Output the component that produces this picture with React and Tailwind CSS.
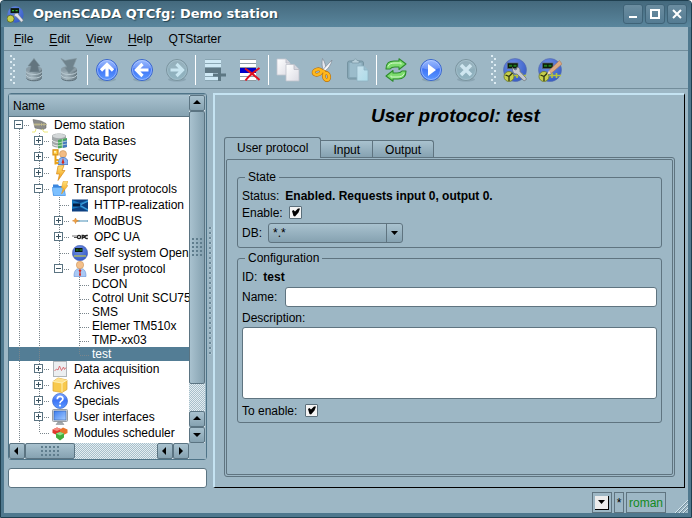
import React from "react";

const FACE = "bg-linear-to-b from-[#a9c2cf] to-[#86a2b1]";

/* ---------- toolbar icons ---------- */

function Defs() {
  return (
    <svg width="0" height="0" className="absolute" aria-hidden="true">
      <defs>
        <linearGradient id="blue" x1="0" y1="0" x2="0" y2="1">
          <stop offset="0" stopColor="#7fa8ff" />
          <stop offset="0.45" stopColor="#3f74f6" />
          <stop offset="1" stopColor="#5c9aff" />
        </linearGradient>
        <linearGradient id="pale" x1="0" y1="0" x2="0" y2="1">
          <stop offset="0" stopColor="#8ba8b5" />
          <stop offset="1" stopColor="#92b5c2" />
        </linearGradient>
        <linearGradient id="steel" x1="0" y1="0" x2="1" y2="0">
          <stop offset="0" stopColor="#8d9fa9" />
          <stop offset="0.35" stopColor="#a0b1ba" />
          <stop offset="1" stopColor="#64767f" />
        </linearGradient>
        <linearGradient id="paper" x1="0" y1="0" x2="1" y2="1">
          <stop offset="0" stopColor="#ffffff" />
          <stop offset="1" stopColor="#dcdce4" />
        </linearGradient>
        <linearGradient id="ice" x1="0" y1="0" x2="1" y2="1">
          <stop offset="0" stopColor="#c8e2ed" />
          <stop offset="1" stopColor="#addbe9" />
        </linearGradient>
        <radialGradient id="globe" cx="0.4" cy="0.3" r="0.8">
          <stop offset="0" stopColor="#6f8fe4" />
          <stop offset="1" stopColor="#2f56c4" />
        </radialGradient>
        <linearGradient id="gold" x1="0" y1="0" x2="0" y2="1">
          <stop offset="0" stopColor="#ffe27a" />
          <stop offset="1" stopColor="#f0980c" />
        </linearGradient>
        <linearGradient id="screen" x1="0" y1="0" x2="1" y2="1">
          <stop offset="0" stopColor="#3c7df0" />
          <stop offset="1" stopColor="#a5ccff" />
        </linearGradient>
      </defs>
    </svg>
  );
}

function Svg({ children, size = 24, box = 24 }) {
  return (
    <svg width={size} height={size} viewBox={`0 0 ${box} ${box}`} className="shrink-0" aria-hidden="true">
      {children}
    </svg>
  );
}

function DbIcon({ down }) {
  return (
    <Svg>
      <path d="M4 11v8c0 2 3.500 3.500 8 3.500s8-1.500 8-3.500v-8z" fill="url(#steel)" />
      <ellipse cx="12" cy="11" rx="8" ry="3" fill="#8a9ca6" />
      <path d="M4 13.500c1 4 15 4 16 0M4 17c1 4 15 4 16 0" fill="none" stroke="#b9cad2" strokeWidth="1" />
      <path d="M4.500 20.500c2 3 13 3 15 0" fill="none" stroke="#5b6c76" />
      {down ? (
        <path d="M4 .5l4 2 5-1 6.500-1-3.500 8.500 2 .5-6 6-4.500-6 2.500-.5z" fill="#6f838d" stroke="#84979f" strokeWidth=".6" />
      ) : (
        <path d="M12 .5l6 7.500h-2l1.500 6h-10L9 8H6z" fill="#63757f" stroke="#7e929c" strokeWidth=".6" />
      )}
    </Svg>
  );
}

function Round({ pale, children }) {
  return (
    <Svg>
      <ellipse cx="12" cy="21.500" rx="9" ry="2" fill="#7d98a5" opacity=".6" />
      <circle cx="12" cy="12" r="10.500" fill={pale ? "url(#pale)" : "url(#blue)"} stroke={pale ? "#7b949f" : "#3a66cc"} />
      <circle cx="12" cy="12" r="9.500" fill="none" stroke={pale ? "#a3bfcb" : "#9fbcff"} strokeWidth=".8" />
      <path d="M3.500 10a8.500 8 0 0 1 17 0c-5 2-12 2-17 0z" fill="#fff" opacity={pale ? ".08" : ".22"} />
      {children}
    </Svg>
  );
}

function Arrow({ pale, turn }) {
  return (
    <Round pale={pale}>
      <path
        d="M12 18.500V7M6 12.500L12 6.500l6 6"
        transform={`rotate(${turn} 12 12)`}
        fill="none"
        stroke={pale ? "#c9e6f1" : "#fff"}
        strokeWidth="3.200"
      />
    </Round>
  );
}

function ItemAdd() {
  return (
    <Svg>
      <rect x="2" y="1" width="16" height="22" fill="#cfe9f5" />
      <path d="M2 1.500h16M2 5.500h16M2 9.500h16M2 18.500h16M2 22.500h16" stroke="#8aa6b3" />
      <rect x="2" y="10" width="16" height="5" fill="#5f7884" />
      <path d="M16.500 10v13M10 17h13" stroke="#5d7783" strokeWidth="3" />
    </Svg>
  );
}

function ItemDelete() {
  return (
    <Svg>
      <rect x="2" y="1" width="16" height="22" fill="#fff" />
      <path d="M2 1.500h16M2 5.500h16M2 9.500h16M2 18.500h16M2 22.500h16" stroke="#8f9ca3" />
      <rect x="2" y="10" width="16" height="5" fill="#0000c8" />
      <path d="M7 10.500c4 3 10 7 14.500 11.500M21.500 10c-4 3-10 7-14 12.500" fill="none" stroke="#e01020" strokeWidth="2" />
    </Svg>
  );
}

function Copy() {
  return (
    <Svg>
      <path d="M1 1h9l4 4v12H1z" fill="url(#paper)" stroke="#c3c7cf" strokeWidth=".8" />
      <path d="M10 1v4h4" fill="#d5d6de" stroke="#b5b8c2" strokeWidth=".8" />
      <path d="M10 6.500h8l5 5V23H10z" fill="url(#paper)" stroke="#bfc3cc" strokeWidth=".8" />
      <path d="M18 6.500v5h5" fill="#d5d6de" stroke="#b5b8c2" strokeWidth=".8" />
    </Svg>
  );
}

function Cut() {
  return (
    <Svg>
      <path d="M11.500.5c2.500 3 3.500 8 3.500 12l-2.500.5c-1.500-4-2-8-1-12.500z" fill="#e6e8ee" stroke="#7f8996" strokeWidth=".7" />
      <path d="M21 2c-1 5-4 9-7.500 11.500L11.500 12z" fill="#f6f7fa" stroke="#7f8996" strokeWidth=".7" />
      <g fill="none" stroke="#b9700a" strokeWidth="3.800">
        <ellipse cx="6.500" cy="14" rx="4" ry="2.600" transform="rotate(-15 6.500 14)" />
        <ellipse cx="15.500" cy="18.500" rx="2.600" ry="3.600" transform="rotate(-12 15.500 18.500)" />
        <path d="M10 12.500l4 1.500" />
      </g>
      <g fill="none" stroke="#ffb81c" strokeWidth="2.600">
        <ellipse cx="6.500" cy="14" rx="4" ry="2.600" transform="rotate(-15 6.500 14)" />
        <ellipse cx="15.500" cy="18.500" rx="2.600" ry="3.600" transform="rotate(-12 15.500 18.500)" />
        <path d="M10 12.500l4 1.500" />
      </g>
    </Svg>
  );
}

function Paste() {
  return (
    <Svg>
      <rect x="1.500" y="3" width="16" height="18" rx="2" fill="#86a7b6" stroke="#7593a1" />
      <rect x="3.500" y="5" width="12" height="14" fill="#9bbccb" />
      <path d="M6 5V2.500h2C8 .5 11 .5 11 2.500h2V5z" fill="#b6ced9" stroke="#7a97a4" strokeWidth=".7" />
      <path d="M11 8h7l4 4v11H11z" fill="url(#ice)" stroke="#8fb3c3" strokeWidth=".8" />
      <path d="M18 8v4h4" fill="#9ac0d0" stroke="#8fb3c3" strokeWidth=".8" />
    </Svg>
  );
}

function Refresh() {
  return (
    <Svg>
      <g fill="#7ddc6e" stroke="#2d8c2c" strokeWidth="1.100" strokeLinejoin="round">
        <path d="M2 11c0-6 3.500-8 8-8h5V.8l7 5.200-7 5.500V9h-4c-2.500 0-4 .5-5 2z" />
        <path d="M22 13c0 6-3.500 8-8 8H9v2.200L2 18l7-5.500V15h4c2.500 0 4-.5 5-2z" />
      </g>
      <path d="M4 8.500C5 5.500 8 5 11 5h6v1.500M20 15.500c-1 3-4 3.500-7 3.500H7v-1.500" fill="none" stroke="#d2f9ca" />
    </Svg>
  );
}

function Station({ tool }) {
  return (
    <Svg>
      <circle cx="12" cy="12" r="11.500" fill="url(#globe)" stroke="#5a6da8" strokeWidth=".6" />
      <rect x="4.500" y="5" width="10.500" height="5.500" fill="#0b1a0b" stroke="#5b6470" strokeWidth=".7" />
      <path d="M6 7.700h3.200M10.500 7.700h3" stroke="#1f7a1f" strokeWidth="2" />
      <path d="M11 17.500h12M14 15v5M18.500 15v5" stroke="#b8c53c" strokeWidth="1.600" />
      <circle cx="6" cy="18.500" r="5" fill="#c6d04c" stroke="#6b7626" strokeWidth=".8" />
      <path d="M2.500 17l3.500 1.500V23M6 18.500L9.500 15" stroke="#2e3510" strokeWidth="1.300" fill="none" />
      {tool === "wrench" && (
        <path
          d="M9.500 9.500l2.500 2.500 1.500-.5.500-2.500c2.500.5 3.500 2.500 3 4.500l6 6.500c1 1.500-1.200 3.500-2.700 2.200L14 16c-3 .5-5-2.500-4.500-6.500z"
          fill="#c5c8cd"
          stroke="#6d7279"
          strokeWidth=".8"
        />
      )}
      {tool === "pencil" && (
        <>
          <path d="M11 12.500L21.500 2.500 24 6 13 15.500z" fill="#dca882" stroke="#a9795a" strokeWidth=".6" />
          <path d="M9 16.500l2-4 2 3z" fill="#f1d8b8" />
        </>
      )}
    </Svg>
  );
}

/* ---------- tree icons, drawn on a 16px grid ---------- */

const treeIcons = {
  station: (
    <Svg size={16} box={16}>
      <path d="M1 2.500l8 1.500 5 2.500v4.500l-3 1.500L3 11z" fill="#8b8b88" stroke="#6b6b69" strokeWidth=".6" />
      <path d="M3 9V6M5 9V6M7 9V6M9.500 9V6M12 9V6M2 7.500h13" stroke="#c4bc8c" strokeWidth=".8" />
      <path d="M0 15h3l1-3M10 12l2 3h4" stroke="#ece87a" fill="none" strokeWidth="1" />
    </Svg>
  ),
  db: (
    <Svg size={16} box={16}>
      <path d="M0 3c0-3.500 14-3.500 14 0v9c0 3.500-14 3.500-14 0z" fill="#a3a8aa" />
      <ellipse cx="7" cy="3" rx="6.500" ry="2.200" fill="#d3d7d8" />
      <path d="M0 7c1 2 5 2.500 7 2.500M0 10.500c1 2 5 2.500 7 2.500" stroke="#ebefef" fill="none" />
      <path d="M6 7l9-2v9l-9 1.500z" fill="#4aa95c" />
      <path d="M10.500 8l4.500-1v7l-4.500 1z" fill="#4378c0" />
      <path d="M6 10l9-2M6 12.700l9-1.700M10.300 6v9" stroke="#d5ecd9" strokeWidth=".7" />
    </Svg>
  ),
  security: (
    <Svg size={16} box={16}>
      <circle cx="11" cy="5" r="3.500" fill="#f2bc84" stroke="#c0843f" strokeWidth=".5" />
      <path d="M6 15.500c0-5 1.500-7 5-7s5 2 5 7z" fill="#8cb6f2" stroke="#3f6fc0" strokeWidth=".8" />
      <path d="M11 9l-1.300 4.500L11 15.500l1.300-2z" fill="#cf2b22" />
      <path d="M1 .8h5v5H1z" fill="#ffd24a" stroke="#d98e14" strokeWidth="1.200" />
      <path d="M3.500 6v9.500M4 11h2.500M4 14h2.500" stroke="#e9a31a" strokeWidth="2" />
      <circle cx="3" cy="2.800" r=".9" fill="#fff" />
    </Svg>
  ),
  bolt: (
    <Svg size={16} box={16}>
      <path d="M6 1l6-.5-2 5h3L6 15.500 7.500 9H4.500z" fill="url(#gold)" stroke="#d88a18" strokeWidth=".7" />
    </Svg>
  ),
  folder: (
    <Svg size={16} box={16}>
      <path d="M1 3.500h5L7 5h6v9.500H1z" fill="#3a86de" />
      <path d="M0 6.500h12l1.500 8h-12z" fill="#7cc0ff" stroke="#4a94e4" strokeWidth=".6" />
      <path d="M11 .5L16 0l-1.500 4.500H16L9.500 13l1.700-6H9.500z" fill="url(#gold)" stroke="#e09a28" strokeWidth=".5" />
    </Svg>
  ),
  http: (
    <Svg size={16} box={16}>
      <rect x="0" y="2.500" width="16" height="12" fill="#0c3f80" />
      <path d="M0 3l8 3 8-3v2l-7 3 7 4v2l-8-4-8 2z" fill="#1a77bd" />
      <path d="M1 8h7" stroke="#041c42" strokeWidth="3" />
      <path d="M9 7.500L16 4M9 9l7 4" fill="none" stroke="#58b6e8" strokeWidth=".7" />
    </Svg>
  ),
  modbus: (
    <Svg size={16} box={16}>
      <path d="M3 8h13" stroke="#8ab6cf" strokeWidth="2" />
      <path d="M3.500 5l.8 2 2.200.8-2.200.8-.8 2-.8-2L.5 7.800 2.700 7z" fill="#f0a040" stroke="#d8842a" strokeWidth=".6" />
      <path d="M8 8h7" stroke="#d7e9f1" strokeWidth=".7" />
    </Svg>
  ),
  opc: (
    <Svg size={16} box={16}>
      <path d="M0 7h5" stroke="#8a8a8a" strokeWidth="1.200" />
      <path d="M2 8.500h3" stroke="#555" strokeWidth="1" />
      <circle cx="7" cy="8" r="1.600" fill="none" stroke="#222" strokeWidth="1.300" />
      <path d="M10.200 10.300V6.500h1.200a1 1 0 0 1 0 2h-1M15.800 6.500h-1.300a1.500 1.500 0 0 0 0 3h1.300" fill="none" stroke="#222" strokeWidth="1.300" />
    </Svg>
  ),
  self: (
    <Svg size={16} box={16}>
      <circle cx="8" cy="8" r="7.700" fill="url(#globe)" stroke="#4a5fae" strokeWidth=".5" />
      <rect x="3" y="3" width="7.500" height="4" fill="#0b1a0b" />
      <path d="M4 5h2.500M7.500 5H10" stroke="#2fa32f" strokeWidth="1.200" />
      <path d="M2 11h12" stroke="#c3c94e" strokeWidth="1.200" />
    </Svg>
  ),
  user: (
    <Svg size={16} box={16}>
      <path d="M2 15.500c0-6 2-8 6-8s6 2 6 8z" fill="#a9c9f5" stroke="#5f8fd6" strokeWidth=".6" />
      <circle cx="8" cy="4" r="3.700" fill="#f4c08a" stroke="#c48a4e" strokeWidth=".5" />
      <path d="M8 8l-1.500 1.500L7.500 11 7 14l1 1.500L9 14l-.5-3 1-1.500z" fill="#d42a20" />
    </Svg>
  ),
  chart: (
    <Svg size={16} box={16}>
      <rect x="1.500" y=".5" width="13" height="15" fill="#eceff1" stroke="#b0b6ba" />
      <path d="M2.500 10l2-2 1.500 1 1.500-4 2 4.500L11.500 6l1 2.500 1.500-2" fill="none" stroke="#d9646c" strokeWidth=".9" />
    </Svg>
  ),
  archive: (
    <Svg size={16} box={16}>
      <path d="M1 4.500L6 1l9 2v9.500l-5 3-9-1.500z" fill="#f8c94c" stroke="#d9a030" strokeWidth=".7" />
      <path d="M1 4.500L6 1l9 2-5 3z" fill="#fde08a" />
      <path d="M1 4.500L10 6l5-3M10 6v9" stroke="#fff0b4" fill="none" />
    </Svg>
  ),
  help: (
    <Svg size={16} box={16}>
      <circle cx="8" cy="8" r="7.500" fill="url(#blue)" stroke="#3c68cc" strokeWidth=".7" />
      <path d="M5.300 6.300c0-3.800 5.600-3.600 5.600-.5C10.900 8 8 7.800 8 10.300" fill="none" stroke="#fff" strokeWidth="1.700" />
      <circle cx="8" cy="12.600" r="1.100" fill="#fff" />
    </Svg>
  ),
  monitor: (
    <Svg size={16} box={16}>
      <rect x=".5" y=".5" width="15" height="12" rx="1" fill="#d6d8da" stroke="#999ea2" />
      <rect x="2" y="2" width="12" height="9" fill="url(#screen)" stroke="#24509a" strokeWidth=".5" />
      <path d="M6 13h4l2 2.500H4z" fill="#a5aaae" stroke="#80858a" strokeWidth=".5" />
    </Svg>
  ),
  modules: (
    <Svg size={16} box={16}>
      <path d="M5 2.500l4 1.500v4.500L5 10 .5 8V4.500z" fill="#e0382c" />
      <path d="M11 2.500l4.500 2V8L11.500 10 8 8V4.500z" fill="#e8742c" />
      <path d="M8 7l4 1.500v4L8 15.500l-4-3v-4z" fill="#3fae3c" />
      <path d="M8 7l4 1.500-4 2-4-2z" fill="#92e08a" />
      <path d="M5 2.500L9 4 5 6 .5 4.500z" fill="#f58a7e" />
    </Svg>
  ),
};

/* ---------- tree ---------- */

// Branch codes: "|" line, "T" tee, "L" last child, " " blank; with a box: "+" / "-" (tee), "=" (last child, open), "R" (root)
const rows = [
  ["R", "station", "Demo station"],
  ["|+", "db", "Data Bases"],
  ["|+", "security", "Security"],
  ["|+", "bolt", "Transports"],
  ["|-", "folder", "Transport protocols"],
  ["||T", "http", "HTTP-realization"],
  ["||+", "modbus", "ModBUS"],
  ["||+", "opc", "OPC UA"],
  ["||T", "self", "Self system Open"],
  ["||=", "user", "User protocol"],
  ["|| T", null, "DCON"],
  ["|| T", null, "Cotrol Unit SCU75"],
  ["|| T", null, "SMS"],
  ["|| T", null, "Elemer TM510x"],
  ["|| T", null, "TMP-xx03"],
  ["|| L", null, "test", true],
  ["|+", "chart", "Data acquisition"],
  ["|+", "archive", "Archives"],
  ["|+", "help", "Specials"],
  ["|+", "monitor", "User interfaces"],
  ["|L", "modules", "Modules scheduler"],
];

function Branch({ kind, height }) {
  const boxed = "+-=R".includes(kind);
  const above = kind !== " " && kind !== "R";
  const below = "|T+-R".includes(kind);
  return (
    <svg width="20" height={height} className="shrink-0" shapeRendering="crispEdges" aria-hidden="true">
      <g stroke="#7a858c" strokeDasharray="1 1" fill="none">
        {above && <path d="M10.500 0v8" />}
        {below && <path d={`M10.500 8V${height}`} />}
        {kind !== "|" && kind !== " " && <path d="M11 8.500h9" />}
      </g>
      {boxed && (
        <g>
          <rect x="5" y="3" width="9" height="9" fill="#5b7482" />
          <rect x="6" y="4" width="7" height="7" fill="#fff" />
          <rect x="7" y="7" width="5" height="1" fill="#3a5360" />
          {kind === "+" && <rect x="9" y="5" width="1" height="5" fill="#3a5360" />}
        </g>
      )}
    </svg>
  );
}

function TreeRow({ row }) {
  const [code, icon, label, selected] = row;
  return (
    <li
      className={`flex items-center whitespace-nowrap ${icon ? "h-4" : "h-3.5"} ${selected ? "bg-[#537d95] text-white" : ""}`}
    >
      {code.split("").map((kind, i) => (
        <Branch key={i} kind={kind} height={icon ? 16 : 14} />
      ))}
      {icon && <span className="mr-1.5 ml-[3px] shrink-0">{treeIcons[icon]}</span>}
      <span className={icon ? "" : "pl-[3px]"}>{label}</span>
    </li>
  );
}

const GLYPHS = {
  up: "M4 9l4-4 4 4z",
  down: "M4 6l4 4 4-4z",
  left: "M9 4L5 8l4 4z",
  right: "M6 4l4 4-4 4z",
};

function ScrollButton({ dir }) {
  return (
    <button
      aria-label={`Scroll ${dir}`}
      className={`flex size-4 shrink-0 items-center justify-center rounded-[2px] border border-[#5b7482] ${FACE}`}
    >
      <svg width="14" height="14" viewBox="1 1 14 14">
        <path d={GLYPHS[dir]} />
      </svg>
    </button>
  );
}

const DOTS = "bg-[radial-gradient(#5f7d8d_1px,transparent_1px)]";
const TRACK = "bg-[repeating-conic-gradient(#a7bfcb_0_25%,#e4edf1_0_50%)] bg-size-[2px_2px]";

function TreePanel() {
  return (
    <div className="flex flex-1 flex-col rounded-[3px] border border-[#4f7488] bg-white">
      <div className="flex flex-1 border-t border-[#7c9aaa] bg-[#9db7c5] pr-px">
        <div className="flex min-w-0 flex-1 flex-col overflow-hidden bg-white">
          <div className={`flex h-[22px] items-center border-b border-[#5b7482] px-1 ${FACE}`}>Name</div>
          <ul className="flex-1 leading-3.5">
            {rows.map((row) => (
              <TreeRow key={row[2]} row={row} />
            ))}
            <li className="flex h-[2px] overflow-hidden" aria-hidden="true">
              <Branch kind="|" height={2} />
            </li>
          </ul>
        </div>
        <div className={`flex w-4 shrink-0 flex-col ${TRACK}`}>
          <ScrollButton dir="up" />
          <div className="flex flex-[10] items-center justify-center rounded-[2px] border border-[#5b7482] bg-linear-to-r from-[#a9c2cf] to-[#86a2b1]">
            <span className={`h-5 w-3 bg-size-[4px_4px] ${DOTS}`} />
          </div>
          <div className="flex-1" />
          <ScrollButton dir="up" />
          <ScrollButton dir="down" />
        </div>
      </div>
      <div className="flex h-4 bg-[#9db7c5] pr-px">
        <div className={`flex flex-1 ${TRACK}`}>
          <ScrollButton dir="left" />
          <div className={`flex w-[50px] items-center justify-center rounded-[2px] border border-[#5b7482] ${FACE}`}>
            <span className={`h-3 w-5 bg-size-[4px_4px] ${DOTS}`} />
          </div>
          <div className="flex-1" />
          <ScrollButton dir="left" />
          <ScrollButton dir="right" />
        </div>
        <div className="w-4" />
      </div>
    </div>
  );
}

/* ---------- form controls ---------- */

function CheckBox({ id }) {
  return (
    <span className="relative size-[13px]">
      <input
        id={id}
        type="checkbox"
        defaultChecked
        className="block size-[13px] appearance-none rounded-[1px] border border-[#5b6f7b] bg-[#f4f4f4]"
      />
      <svg width="13" height="13" viewBox="0 0 13 13" className="pointer-events-none absolute inset-0">
        <path d="M3 5l1.500-1L6 5.500 9 2.500h2L9.500 6.500 6 10.500 4.500 10z" fill="#000" />
      </svg>
    </span>
  );
}

function Group({ title, children }) {
  return (
    <fieldset className="rounded-[3px] border border-[#5f7480] px-1 pb-[3px]">
      <legend className="ml-[3px] px-[3px] leading-3.5">{title}</legend>
      {children}
    </fieldset>
  );
}

const LINE = "flex h-[17px] items-center";

function Form() {
  return (
    <div className="flex flex-col gap-[3px] px-2.5 pt-2.5">
      <Group title="State">
        <div className={`mt-[3px] gap-1.5 ${LINE}`}>
          Status:<b>Enabled. Requests input 0, output 0.</b>
        </div>
        <div className={`gap-1.5 ${LINE}`}>
          <label htmlFor="enable">Enable:</label>
          <CheckBox id="enable" />
        </div>
        <div className="mt-[2px] mb-px flex h-5 items-center gap-1.5">
          <label htmlFor="db">DB:</label>
          <span className={`flex h-5 rounded-[3px] border border-[#5f7480] ${FACE}`}>
            <span className="relative flex">
              <select id="db" className="w-[133px] appearance-none bg-transparent pl-1 outline-none">
                <option>*.*</option>
              </select>
              <span className="pointer-events-none absolute inset-y-0 right-0 flex w-4 items-center justify-center border-l border-[#5f7480]">
                <svg width="7" height="4">
                  <path d="M0 0h7L3.500 4z" />
                </svg>
              </span>
            </span>
          </span>
        </div>
      </Group>
      <Group title="Configuration">
        <div className={`mt-[3px] gap-1.5 ${LINE}`}>
          ID:<b>test</b>
        </div>
        <div className="mt-[2px] flex h-5 items-center gap-2">
          <label htmlFor="name">Name:</label>
          <input id="name" className="h-5 min-w-0 flex-1 rounded-[3px] border border-[#5f7480] bg-white px-1 outline-none" />
        </div>
        <div className={`mt-[2px] ${LINE}`}>
          <label htmlFor="description">Description:</label>
        </div>
        <textarea
          id="description"
          className="mt-px block h-[72px] w-full resize-none rounded-[3px] border border-[#5f7480] bg-white px-1 outline-none"
        />
        <div className={`mt-[3px] gap-2 ${LINE}`}>
          <label htmlFor="to-enable">To enable:</label>
          <CheckBox id="to-enable" />
        </div>
      </Group>
    </div>
  );
}

function Tabs() {
  const side = `h-[17px] border-t border-r border-[#5f7480] ${FACE}`;
  return (
    <div role="tablist" className="flex items-end">
      <button
        role="tab"
        aria-selected="true"
        className="relative -mb-px h-[21px] rounded-t-[3px] border border-b-0 border-[#5f7480] bg-[#9db7c5] px-3"
      >
        User protocol
      </button>
      <button role="tab" className={`px-3 ${side}`}>Input</button>
      <button role="tab" className={`rounded-tr-[3px] px-3 ${side}`}>Output</button>
    </div>
  );
}

/* ---------- window ---------- */

function Grip() {
  return (
    <span className="h-[30px] w-[6px] shrink-0 bg-[radial-gradient(circle_at_1px_1px,#dcebf2_1px,transparent_1px),radial-gradient(circle_at_4px_4px,#dcebf2_1px,transparent_1px)] bg-size-[6px_6px]" />
  );
}

function Tool({ name, children }) {
  return (
    <button aria-label={name} className="flex h-9 w-[35px] shrink-0 items-center justify-center">
      {children}
    </button>
  );
}

function Divider() {
  return <span className="mx-px h-[30px] w-px shrink-0 bg-white" />;
}

function WindowButton({ name, d }) {
  return (
    <button
      aria-label={name}
      className="flex size-5 items-center justify-center rounded-[3px] border border-[#3f6377] bg-linear-to-b from-[#6b8da0] to-[#557c93]"
    >
      <svg width="10" height="10" fill="none" stroke="#fff" strokeWidth="2">
        <path d={d} />
      </svg>
    </button>
  );
}

const menus = ["File", "Edit", "View", "Help"];

export default function App() {
  return (
    <div className="flex min-h-screen flex-col rounded-t-[4px] border border-[#1f3f4f] bg-[#4f788e] font-['Liberation_Sans',Arial,sans-serif] text-[12px] text-black">
      <Defs />
      <header className="flex h-[26px] items-center gap-2 rounded-t-[3px] bg-linear-to-b from-[#44697d] to-[#5a869d] pr-1 pl-1.5">
        <Svg size={17}>
          <circle cx="12" cy="12" r="11.500" fill="url(#globe)" />
          <rect x="5" y="3" width="12" height="7" fill="#0b1a0b" />
          <path d="M7 6.500h3M12 6.500h3" stroke="#35b035" strokeWidth="2" />
          <circle cx="5" cy="18" r="5" fill="#c6d04c" stroke="#4f5a18" />
          <path d="M11 11l4-1 2 3 6 7-2.500 3-7.500-8-3-1z" fill="#e2e4e8" stroke="#6d7279" strokeWidth=".7" />
        </Svg>
        <h1 className="flex-1 pl-px font-['DejaVu_Sans',sans-serif] text-[13px] font-bold whitespace-nowrap text-white [text-shadow:1px_1px_1px_#24414f]">
          OpenSCADA QTCfg: Demo station
        </h1>
        <div className="flex gap-[2px]">
          <WindowButton name="Minimize" d="M1 8h8" />
          <WindowButton name="Maximize" d="M1 1h8v8H1z" />
          <WindowButton name="Close" d="M1 1l8 8M9 1L1 9" />
        </div>
      </header>

      <div className="mx-[3px] mb-1 flex flex-1 flex-col bg-[#9db7c5]">
        <nav className="flex h-6 items-center border-b border-[#738d9b] pl-0.5">
          {menus.map((m) => (
            <button key={m} className="px-2">
              <span className="underline underline-offset-2">{m[0]}</span>
              {m.slice(1)}
            </button>
          ))}
          <button className="px-2">QTStarter</button>
        </nav>

        <div className="flex h-[38px] items-center border-b border-[#738d9b] pl-1.5">
          <Grip />
          <Tool name="Load"><DbIcon /></Tool>
          <Tool name="Save"><DbIcon down /></Tool>
          <Divider />
          <Tool name="Up"><Arrow turn={0} /></Tool>
          <Tool name="Previous"><Arrow turn={-90} /></Tool>
          <Tool name="Next"><Arrow pale turn={90} /></Tool>
          <Divider />
          <Tool name="Add item"><ItemAdd /></Tool>
          <Tool name="Delete item"><ItemDelete /></Tool>
          <Divider />
          <Tool name="Copy"><Copy /></Tool>
          <Tool name="Cut"><Cut /></Tool>
          <Tool name="Paste"><Paste /></Tool>
          <Divider />
          <Tool name="Refresh"><Refresh /></Tool>
          <Tool name="Start">
            <Round><path d="M9 6l8 6-8 6z" fill="#fff" /></Round>
          </Tool>
          <Tool name="Stop">
            <Round pale><path d="M7 7l10 10M17 7L7 17" stroke="#cfe6f0" strokeWidth="3.500" /></Round>
          </Tool>
          <span className="w-2 shrink-0" />
          <Grip />
          <Tool name="Configurator"><Station tool="wrench" /></Tool>
          <Tool name="Vision"><Station tool="pencil" /></Tool>
        </div>

        <main className="flex flex-1 pt-1 pr-[3px] pl-1">
          <aside className="flex w-[199px] shrink-0 flex-col gap-2">
            <TreePanel />
            <input aria-label="Search" className="h-5 rounded-[3px] border border-[#5b7482] bg-white px-1 outline-none" />
          </aside>
          <div className="flex w-1.5 shrink-0 items-center justify-center">
            <span className="h-32 w-[3px] bg-[radial-gradient(circle_at_1px_1px,#6b8898_1px,#c6dce6_1px,transparent_2px)] bg-size-[3px_5px]" />
          </div>
          <section className="flex min-w-0 flex-1 flex-col border-t-2 border-r border-b border-l-2 border-t-[#c5e3f2] border-r-black border-b-black border-l-[#c5e3f2] px-[9px] pb-2.5">
            <h2 className="flex h-[42px] items-center justify-center pl-3 text-[19px] font-bold italic">
              User protocol: test
            </h2>
            <Tabs />
            <div className="flex-1 rounded-b-[3px] rounded-tr-[3px] border border-[#5f7480] p-px">
              <div className="h-full rounded-[2px] border border-[#5f7480]">
                <Form />
              </div>
            </div>
          </section>
        </main>

        <footer className="flex h-[25px] items-end justify-end gap-[2px]">
          <span className="flex h-[21px] w-5 items-center justify-center border border-[#5f7480]">
            <button
              aria-label="Messages"
              className="flex size-3.5 items-center justify-center border-r border-b border-black bg-[#ececec]"
            >
              <svg width="7" height="4">
                <path d="M0 0h7L3.500 4z" />
              </svg>
            </button>
          </span>
          <span className="flex h-[21px] w-2.5 items-center justify-center border border-[#5f7480]">*</span>
          <span className="flex h-[21px] w-10 items-center justify-center border border-[#5f7480] text-[#118a22]">roman</span>
          <svg width="20" height="14" aria-hidden="true">
            <path d="M7 14L20 1M11 14l9-9M15 14l5-5" stroke="#d9eaf2" />
            <path d="M8 14L20 2M12 14l8-8M16 14l4-4" stroke="#6f8b99" />
          </svg>
        </footer>
      </div>
    </div>
  );
}
